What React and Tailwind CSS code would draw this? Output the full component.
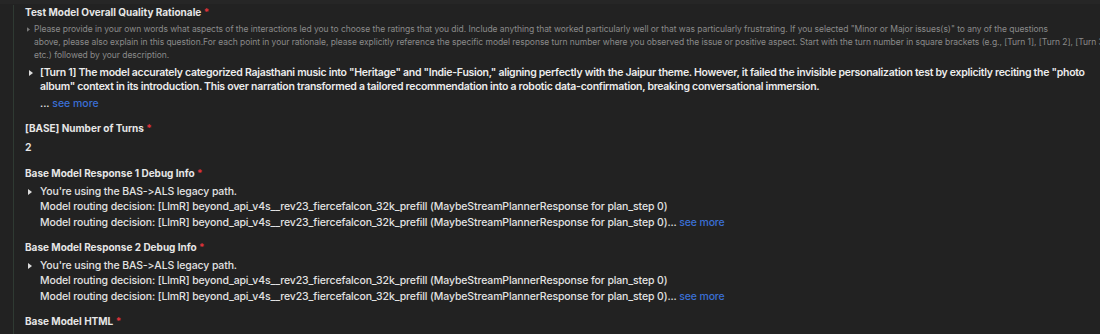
const Tri = ({ className = '' }) => (
  <svg viewBox="0 0 4 6" className={className}>
    <polygon points="0,0 4,3 0,6" fill="currentColor" />
  </svg>
);

const Label = ({ children, className = '' }) => (
  <div className={`whitespace-nowrap text-[10px] font-bold leading-[14px] text-[#e6e6e6] ${className}`}>
    {children} <span className="text-[#e0323a]">*</span>
  </div>
);

const SeeMore = () => <span className="text-[#3b6fd4]">see more</span>;

const DebugBlock = ({ className = '' }) => (
  <div className={`relative pl-[15px] text-[10.5px] font-medium leading-[15.7px] tracking-[-0.125px] text-[#e2e2e2] ${className}`}>
    <Tri className="absolute left-[3px] top-[5px] h-[6px] w-[4px] text-[#dcdcdc]" />
    <div className="whitespace-nowrap">You're using the BAS-&gt;ALS legacy path.</div>
    <div className="whitespace-nowrap">Model routing decision: [LlmR] beyond_api_v4s__rev23_fiercefalcon_32k_prefill (MaybeStreamPlannerResponse for plan_step 0)</div>
    <div className="whitespace-nowrap">
      Model routing decision: [LlmR] beyond_api_v4s__rev23_fiercefalcon_32k_prefill (MaybeStreamPlannerResponse for plan_step 0)... <SeeMore />
    </div>
  </div>
);

export default function App() {
  return (
    <div className="h-[334px] w-[1100px] overflow-hidden bg-[#222222] font-['Inter',sans-serif] [font-feature-settings:'calt'_0,'liga'_0]">
      <div className="h-[4px] bg-[#262626]" />
      <div className="ml-[13px] h-[330px] border-l border-[#2f3a33] pl-[11px]">
        <Label className="mt-[1px]">Test Model Overall Quality Rationale</Label>

        <div className="relative mt-[3.5px] pl-[9px] text-[8.5px] leading-[13px] tracking-[-0.05px] text-[#8a8a8a]">
          <Tri className="absolute left-[2px] top-[4px] h-[5px] w-[3px] text-[#7a7a7a]" />
          <div className="whitespace-nowrap">Please provide in your own words what aspects of the interactions led you to choose the ratings that you did. Include anything that worked particularly well or that was particularly frustrating. If you selected "Minor or Major issues(s)" to any of the questions</div>
          <div className="whitespace-nowrap">above, please also explain in this question.For each point in your rationale, please explicitly reference the specific model response turn number where you observed the issue or positive aspect. Start with the turn number in square brackets (e.g., [Turn 1], [Turn 2], [Turn 3],</div>
          <div className="whitespace-nowrap">etc.) followed by your description.</div>
        </div>

        <div className="relative mt-[4.5px] pl-[15px] text-[10.5px] font-semibold leading-[14px] tracking-[-0.28px] text-[#ececec]">
          <Tri className="absolute left-[4px] top-[4px] h-[6px] w-[4px] text-[#dcdcdc]" />
          <div className="whitespace-nowrap">[Turn 1] The model accurately categorized Rajasthani music into "Heritage" and "Indie-Fusion," aligning perfectly with the Jaipur theme. However, it failed the invisible personalization test by explicitly reciting the "photo</div>
          <div className="whitespace-nowrap">album" context in its introduction. This over narration transformed a tailored recommendation into a robotic data-confirmation, breaking conversational immersion.</div>
          <div className="mt-[3px] whitespace-nowrap text-[10.5px] font-medium tracking-normal">... <SeeMore /></div>
        </div>

        <Label className="mt-[10px]">[BASE] Number of Turns</Label>
        <div className="mt-[6px] text-[10.5px] font-semibold leading-[14px] text-[#e8e8e8]">2</div>

        <Label className="mt-[11px]">Base Model Response 1 Debug Info</Label>
        <DebugBlock className="mt-[3.5px]" />

        <Label className="mt-[9.5px]">Base Model Response 2 Debug Info</Label>
        <DebugBlock className="mt-[3.5px]" />

        <Label className="mt-[9.5px]">Base Model HTML</Label>
      </div>
    </div>
  );
}
